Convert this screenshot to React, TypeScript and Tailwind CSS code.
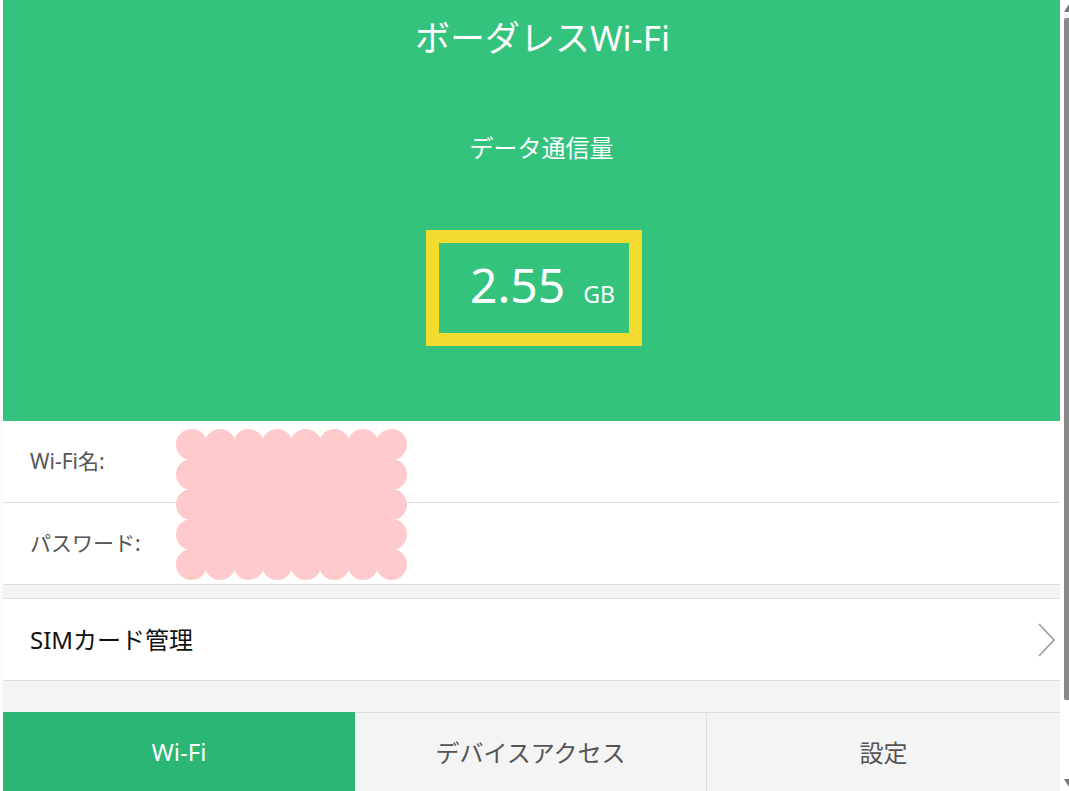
import React from "react";

const font = { fontFamily: '"Noto Sans", "Noto Sans CJK JP", sans-serif' };

function Blob() {
  const cols = 8;
  const rows = 5;
  const r = 15.5;
  const w = 231;
  const h = 151;
  const circles: { cx: number; cy: number }[] = [];
  for (let i = 0; i < cols; i++) {
    for (let j = 0; j < rows; j++) {
      const cx = r + (i * (w - 2 * r)) / (cols - 1);
      const cy = r + (j * (h - 2 * r)) / (rows - 1);
      circles.push({ cx, cy });
    }
  }
  return (
    <svg width={w} height={h} viewBox={`0 0 ${w} ${h}`} className="absolute left-[173px] top-[8px]">
      <rect x={r} y={r} width={w - 2 * r} height={h - 2 * r} fill="#ffcacc" />
      {circles.map((c, k) => (
        <circle key={k} cx={c.cx} cy={c.cy} r={r} fill="#ffcacc" />
      ))}
    </svg>
  );
}

export default function App() {
  return (
    <div className="flex h-[791px] w-[1069px] overflow-hidden bg-white" style={font}>
      <div className="w-[3px] shrink-0 bg-[#fbfbfb]" />
      <div className="flex w-[1057px] shrink-0 flex-col">
        {/* header */}
        <div className="flex h-[421px] shrink-0 flex-col items-center bg-[#34c37c] text-white">
          <div className="h-[76px] pl-[22px] text-[35px] leading-[76px]">ボーダレスWi-Fi</div>
          <div className="mt-[56px] pl-[20px] text-[24px] leading-[32px]">データ通信量</div>
          <div className="ml-[4px] mt-[66px] flex h-[116px] w-[216px] items-center justify-center border-[13px] border-[#f4dc2e] pl-[18px]">
            <div className="flex items-baseline gap-[18px] pb-[6px]">
              <span className="text-[48px] leading-none">2.55</span>
              <span className="text-[23px] leading-none">GB</span>
            </div>
          </div>
        </div>
        {/* info rows */}
        <div className="relative bg-white">
          <div className="flex h-[82px] items-center border-b border-[#dedede] pl-[27px] text-[21px] text-[#555]">
            Wi-Fi名:
          </div>
          <div className="flex h-[82px] items-center border-b border-[#dedede] pl-[27px] text-[21px] text-[#555]">
            パスワード:
          </div>
          <Blob />
        </div>
        <div className="h-[14px] shrink-0 border-b border-[#dedede] bg-[#f4f4f4]" />
        <div className="flex h-[82px] shrink-0 items-center justify-between border-b border-[#dedede] bg-white pl-[27px] pr-[4px]">
          <span className="text-[24px] text-[#111]">SIMカード管理</span>
          <svg width="18" height="34" viewBox="0 0 18 34" fill="none">
            <polyline points="1,1 16,17 1,33" stroke="#9a9a9a" strokeWidth="1.6" fill="none" />
          </svg>
        </div>
        <div className="h-[31px] shrink-0 bg-[#f4f4f4]" />
        <div className="flex h-[80px] shrink-0 border-t border-[#dedede] bg-[#f4f4f4]">
          <div className="-mt-px flex w-[352px] items-center justify-center bg-[#2bb673] text-[24px] text-white">
            Wi-Fi
          </div>
          <div className="flex w-[352px] items-center justify-center border-r border-[#dedede] text-[24px] text-[#555]">
            デバイスアクセス
          </div>
          <div className="flex flex-1 items-center justify-center text-[24px] text-[#555]">設定</div>
        </div>
      </div>
      <div className="w-[4px] shrink-0 bg-white" />
      {/* scrollbar */}
      <div className="flex w-[5px] shrink-0 flex-col bg-[#f1f1f1]">
        <div className="h-[14px] shrink-0 bg-white">
          <svg width="5" height="14" viewBox="0 0 5 14">
            <polygon points="5,4 0,12 5,12" fill="#777" />
          </svg>
        </div>
        <div className="mt-[4px] h-[682px] shrink-0 rounded-l-[2px] bg-[#8a8a8a]" />
        <div className="flex-1 bg-white" />
        <div className="h-[12px] shrink-0 bg-white">
          <svg width="5" height="12" viewBox="0 0 5 12">
            <polygon points="0,0 5,0 5,8" fill="#777" />
          </svg>
        </div>
      </div>
    </div>
  );
}
